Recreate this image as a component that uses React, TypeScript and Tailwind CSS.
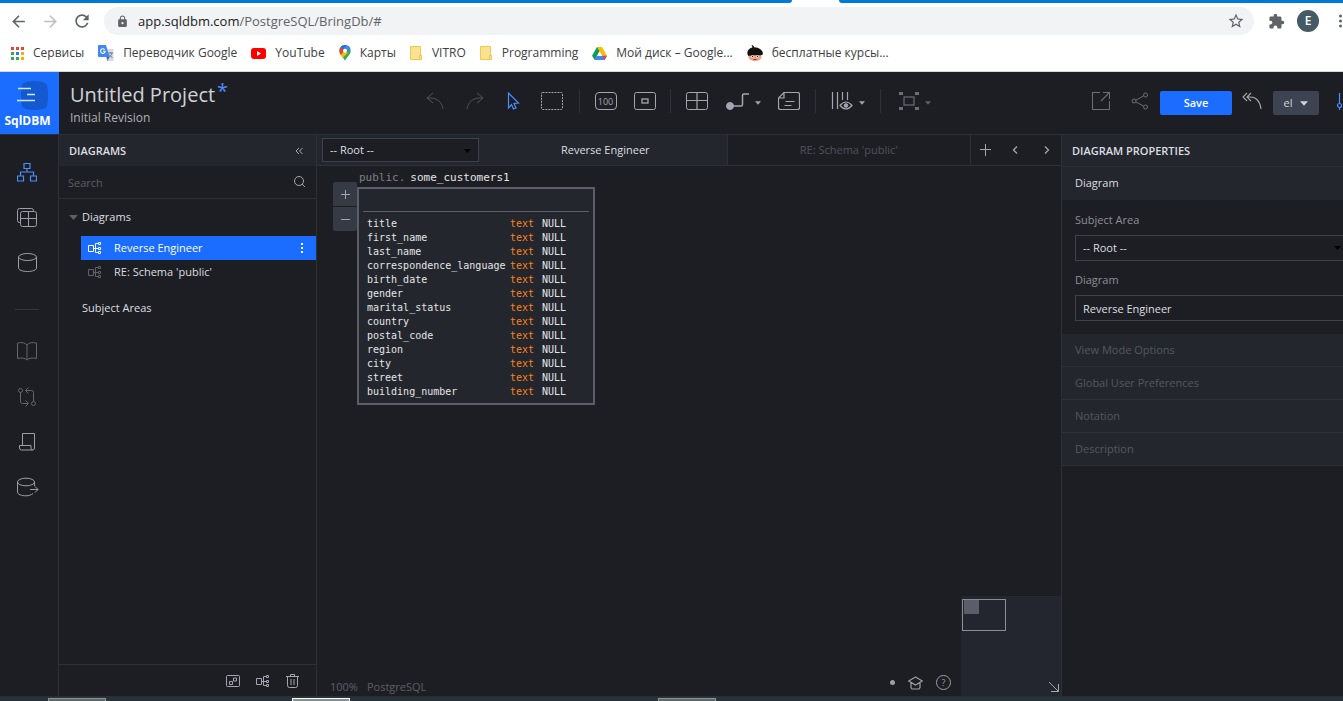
import React from "react";
import { MdLock, MdStarBorder, MdExtension, MdArrowBack, MdArrowForward, MdRefresh } from "react-icons/md";

type SvgProps = { w: number; h: number; className?: string; children: React.ReactNode };

function Icon({ w, h, className = "", children }: SvgProps) {
  return (
    <svg
      width={w}
      height={h}
      viewBox={`0 0 ${w} ${h}`}
      fill="none"
      stroke="currentColor"
      strokeWidth="1"
      className={`shrink-0 ${className}`}
      aria-hidden="true"
    >
      {children}
    </svg>
  );
}

const DiagramIcon = ({ className = "" }: { className?: string }) => (
  <Icon w={14} h={12} className={className}>
    <path d="M.5 3.500h5v6h-5zM5.500 6.500h5M7.500 1.500v9M7.500 1.500h3M7.500 10.500h3" />
    <path d="M10.500.5h2v2h-2zM10.500 5.500h2v2h-2zM10.500 9.500h2v2h-2z" />
  </Icon>
);

const Caret = ({ className = "" }: { className?: string }) => (
  <svg width="7" height="4" viewBox="0 0 7 4" fill="currentColor" className={`shrink-0 ${className}`} aria-hidden="true">
    <path d="M0 0h7L3.500 4z" />
  </svg>
);

const bookmarks = [
  {
    label: "Сервисы",
    icon: (
      <svg width="13" height="13" viewBox="0 0 13 13" aria-hidden="true">
        <path fill="#ea4335" d="M0 0h3v3H0zM5 0h3v3H5zM10 0h3v3h-3z" />
        <path fill="#34a853" d="M0 5h3v3H0zM0 10h3v3H0z" />
        <path fill="#1a84f0" d="M5 5h3v3H5z" />
        <path fill="#34a853" d="M5 10h3v3H5z" />
        <path fill="#fbab05" d="M10 5h3v3h-3zM10 10h3v3h-3z" />
      </svg>
    ),
  },
  {
    label: "Переводчик Google",
    icon: (
      <svg width="16" height="16" viewBox="0 0 16 16" aria-hidden="true">
        <path fill="#d8dade" d="M6 4h9.500v12H9z" />
        <path stroke="#6b7f93" fill="none" d="M10 8h5M12.500 7v1M14 8c-.5 2-2 3.500-3.500 4.500M11 9.500c.8 1.500 2 2.500 3.500 3" />
        <path fill="#4285f4" d="M1 0h7l3.500 12H1a1 1 0 0 1-1-1V1a1 1 0 0 1 1-1z" />
        <path fill="#3367d6" d="M8.500 12h3L9.500 16z" />
        <path stroke="#fff" strokeWidth="1.100" fill="none" d="M6.700 4.600A2.300 2.300 0 1 0 7.200 6.300H5" />
      </svg>
    ),
  },
  {
    label: "YouTube",
    icon: (
      <svg width="15" height="11" viewBox="0 0 15 11" aria-hidden="true">
        <rect width="15" height="11" rx="3" fill="#f00" />
        <path d="M6 3l4 2.500L6 8z" fill="#fff" />
      </svg>
    ),
  },
  {
    label: "Карты",
    icon: (
      <svg width="12" height="16" viewBox="0 0 12 16" aria-hidden="true">
        <path fill="#34a853" d="M6 16C5.500 13 .3 10 .3 5.700A5.700 5.700 0 0 1 11.700 5.700C11.700 10 6.500 13 6 16z" />
        <path fill="#fbbc04" d="M1 8.500l4.800-5 3 4.500-5 4.700C2.500 11.200 1.500 10 1 8.500z" />
        <path fill="#ea4335" d="M1.600 2.100l4 3.400-3.800 4.500C.2 7.500-.2 4.500 1.600 2.100z" />
        <path fill="#1a73e8" d="M1.600 2.100C3.200 0 5.800-.4 7.800.3L4.200 4.500z" />
        <path fill="#4285f4" d="M7.800.3c1.700.5 3 1.800 3.600 3.400L7.500 7.800 4.200 4.500z" />
        <circle cx="6" cy="5.700" r="2" fill="#fff" />
      </svg>
    ),
  },
  { label: "VITRO", icon: <FolderIcon /> },
  { label: "Programming", icon: <FolderIcon /> },
  {
    label: "Мой диск – Google...",
    icon: (
      <svg width="15" height="13" viewBox="0 0 15 13" aria-hidden="true">
        <path fill="#0f9d58" d="M5 0h2.500l1.300 2.400L2.700 13 0 8.700z" />
        <path fill="#fbbc04" d="M5 0h5l5 8.700h-5z" />
        <path fill="#4285f4" d="M5 8.700h10L12.500 13H2.500z" />
        <path fill="#ea4335" d="M10.500 8.700H15L12.500 13z" />
        <path fill="#fff" d="M7.500 4.500l2.400 4.200H5.100z" />
      </svg>
    ),
  },
  {
    label: "бесплатные курсы...",
    icon: (
      <svg width="16" height="16" viewBox="0 0 16 16" aria-hidden="true">
        <path fill="#e9a184" d="M1.500 8h13v3.500c0 3-3 4.500-6.500 4.500s-6.500-1.500-6.500-4.500z" />
        <path fill="#111" d="M4.500 0C6 0 7 1 7.300 2.300 12 2.500 16 5 16 9.200l-1.500.8C14 10.500 3 9.500 1.500 11 0 9.500-.2 6 2 4.200 3 3.200 4.200 2.600 5.500 2.400z" />
        <circle cx="5.500" cy="11.500" r="1.200" fill="#fff" />
        <circle cx="10.500" cy="11.500" r="1.200" fill="#fff" />
        <circle cx="5.500" cy="11.500" r=".7" fill="#222" />
        <circle cx="10.500" cy="11.500" r=".7" fill="#222" />
        <path stroke="#a33" d="M6.500 14.500h3" />
      </svg>
    ),
  },
];

function FolderIcon() {
  return (
    <svg width="13" height="14" viewBox="0 0 13 14" aria-hidden="true">
      <path fill="#fde293" stroke="#f0c84c" d="M.5.5h10v13H.5z" />
      <path fill="#fde293" stroke="#f0c84c" d="M9.500 9.500h2v4h-2z" />
    </svg>
  );
}

function BrowserChrome() {
  return (
    <div className="shrink-0 bg-white">
      <div className="flex h-[3px]">
        <div className="w-[59%] rounded-br-sm bg-[#0078d7]" />
        <div className="w-[47px]" />
        <div className="flex-1 rounded-bl-sm bg-[#0078d7]" />
      </div>
      <div className="flex h-9 items-center text-[#5f6368]">
        <button aria-label="Back" className="flex w-9 justify-center"><MdArrowBack size={19} /></button>
        <button aria-label="Forward" className="flex w-7 justify-center text-[#bdbfc2]"><MdArrowForward size={19} /></button>
        <button aria-label="Reload" className="flex w-9 justify-center"><MdRefresh size={20} /></button>
        <div className="ml-1 flex h-7 flex-1 items-center rounded-full bg-[#f1f3f4] pl-3 pr-[9px]">
          <MdLock size={13} />
          <div className="ml-[9px] flex-1 text-[13px] leading-5">
            <span className="text-[#202124]">app.sqldbm.com</span>/PostgreSQL/BringDb/#
          </div>
          <button aria-label="Bookmark this page"><MdStarBorder size={18} /></button>
        </div>
        <button aria-label="Extensions" className="ml-3 flex w-5 justify-center"><MdExtension size={17} /></button>
        <button className="ml-[11px] flex size-[22px] items-center justify-center rounded-full bg-[#455a64] text-xs font-semibold text-white">
          E
        </button>
        <button aria-label="Menu" className="ml-4 flex w-2 shrink-0 overflow-hidden">
          <svg width="8" height="14" viewBox="0 0 8 14" fill="currentColor" aria-hidden="true">
            <circle cx="5.500" cy="2" r="1.500" /><circle cx="5.500" cy="7" r="1.500" /><circle cx="5.500" cy="12" r="1.500" />
          </svg>
        </button>
      </div>
      <nav className="flex h-[33px] items-center gap-[14px] border-b border-[#d5d9dc] pb-1 pl-[11px] text-xs text-[#3c4043]">
        {bookmarks.map((b) => (
          <a key={b.label} href="#" className="flex items-center gap-[9px] whitespace-nowrap">
            {b.icon}
            {b.label}
          </a>
        ))}
      </nav>
    </div>
  );
}

const Separator = () => <div className="mx-1.5 h-6 w-px bg-[#2f3138]" />;

function Tool({ label, className, children }: { label: string; className: string; children: React.ReactNode }) {
  return (
    <button aria-label={label} className={`flex h-8 items-center justify-center gap-1.5 ${className}`}>
      {children}
    </button>
  );
}

function Header() {
  return (
    <header className="flex h-[63px] shrink-0 border-b border-[#2d3037]">
      <a href="#" className="flex h-[62px] w-[59px] shrink-0 flex-col items-center bg-[#1a6dff] pt-2">
        <svg width="37" height="31" viewBox="0 0 37 31" aria-hidden="true">
          <path d="M11 5c1-3 7-4 12.500-4S35 2 36 5c1.300 6 1.300 15 0 21-1 3-7 4-12.500 4S12 29 11 26c-1.300-6-1.300-15 0-21z" fill="#1459cf" />
          <path d="M7 8.500h13M16 14.500h8M6 20.500h18" stroke="#c9ebff" strokeWidth="1.600" fill="none" />
        </svg>
        <span className="mt-0.5 pr-1 text-xs font-bold leading-4 text-white">SqlDBM</span>
      </a>
      <div className="flex w-[356px] shrink-0 flex-col pl-[11px] pt-[9px]">
        <div className="flex items-start text-xl leading-7 text-[#d0d2d6]">
          Untitled Project<span className="-mt-1 ml-0.5 text-[#4a8dff]">*</span>
        </div>
        <div className="mt-px text-xs leading-4 text-[#aeb0b5]">Initial Revision</div>
      </div>
      <div className="flex h-[58px] items-center text-[#a3a6ae]">
        <Tool label="Undo" className="w-10 text-[#50525c]">
          <Icon w={18} h={18}><path d="M7 1L1 6l6 5M1 6h3c7 0 12 4 13 11" /></Icon>
        </Tool>
        <Tool label="Redo" className="w-10 text-[#50525c]">
          <Icon w={18} h={18}><path d="M11 1l6 5-6 5M17 6h-3C7 6 2 10 1 17" /></Icon>
        </Tool>
        <Tool label="Select" className="w-9 text-[#4a8dff]">
          <Icon w={13} h={18}><path strokeWidth="1.200" d="M1.500 1v15l3-3.500 2 4.500 2.500-1-2-4.500 4.500-.5z" /></Icon>
        </Tool>
        <Tool label="Marquee" className="w-[42px]">
          <Icon w={22} h={18}><rect x=".5" y=".5" width="21" height="17" rx="1" strokeDasharray="2 1" /></Icon>
        </Tool>
        <Separator />
        <Tool label="Zoom to 100" className="w-[39px]">
          <span className="flex h-[18px] w-[22px] items-center justify-center rounded-sm border border-[#a3a6ae] text-[9px] leading-none">100</span>
        </Tool>
        <Tool label="Fit" className="w-[39px]">
          <Icon w={22} h={18}><rect x=".5" y=".5" width="21" height="17" rx="2" /><rect x="8" y="7" width="6" height="4" strokeWidth="1.300" /></Icon>
        </Tool>
        <Separator />
        <Tool label="Add table" className="w-10">
          <Icon w={22} h={18}><rect x=".5" y=".5" width="21" height="17" rx="2" /><path d="M11 .5v17M.5 8.500h21" strokeWidth="1.200" /></Icon>
        </Tool>
        <Tool label="Add relation" className="w-[52px]">
          <Icon w={23} h={18}><circle cx="4" cy="14" r="3.500" fill="currentColor" /><path strokeWidth="1.500" d="M6 14h9q1.500 0 1.500-1.500V3.500Q16.500 2 18 2h5" /></Icon>
          <Caret className="mt-1 w-1.5" />
        </Tool>
        <Tool label="Add note" className="w-10">
          <Icon w={22} h={18}><path d="M6 .5h13.500q2 0 2 2v13q0 2-2 2h-17q-2 0-2-2V6zM6 .5V6H.5M7.500 9.500h9M6.500 13.500h7" strokeWidth="1.200" /></Icon>
        </Tool>
        <Separator />
        <Tool label="View mode" className="w-[52px]">
          <Icon w={22} h={20}><path d="M1.500 1v17M6.500 1v17M11.500 1v8M16.500 1v8" strokeWidth="1.200" /><path d="M9 14.500q6-7 12 0-6 7-12 0z" strokeWidth="1.200" /><circle cx="15" cy="14.500" r="1.800" fill="currentColor" /></Icon>
          <Caret className="mt-1 w-1.5" />
        </Tool>
        <Separator />
        <Tool label="Arrange" className="w-14 text-[#5d606a]">
          <Icon w={20} h={18} className="text-[#6b6d77]"><rect x="5" y="5" width="10" height="8" strokeWidth="1.200" /><path fill="currentColor" stroke="none" d="M0 0h4v3H0zM16 0h4v3h-4zM0 15h4v3H0zM16 15h4v3h-4z" /></Icon>
          <Caret className="mt-1 w-1.5" />
        </Tool>
      </div>
      <div className="ml-auto flex items-center text-[#6b6d77]">
        <Tool label="Export" className="w-[39px] pb-1">
          <Icon w={18} h={18}><path d="M8 .5H.5v17h17V9M11 .5h6.500V7M17.500.5L9 9" strokeWidth="1.100" /></Icon>
        </Tool>
        <Tool label="Share" className="w-[40px] pb-1">
          <Icon w={18} h={18}><circle cx="3" cy="9" r="2" /><circle cx="14.500" cy="3" r="2" /><circle cx="14.500" cy="15" r="2" /><path d="M5 8l7.500-4M5 10l7.500 4" /></Icon>
        </Tool>
        <button className="h-6 w-[72px] rounded-[2px] bg-[#1a6dff] text-[11px] font-semibold text-white">Save</button>
        <Tool label="Revert" className="w-[41px] pb-1 pr-0.5 text-[#a3a6ae]">
          <Icon w={20} h={18}><path d="M5 1L1 5l4 4M9 1L5 5l4 4M5 5h3c7 0 10 4 11 12" strokeWidth="1.100" /></Icon>
        </Tool>
        <button className="flex h-6 w-[46px] items-center justify-center gap-2 rounded-[2px] bg-[#3d4350] text-[11px] text-[#d0d2d6]">
          el <Caret className="h-[5px] w-2" />
        </button>
        <button aria-label="Settings" className="ml-[17px] w-[7px] overflow-hidden pb-1 text-[#4a8dff]">
          <Icon w={7} h={18}><path d="M3.500 1v10M3.500 16v2" strokeWidth="1.200" /><circle cx="3.500" cy="13.500" r="2" strokeWidth="1.200" /></Icon>
        </button>
      </div>
    </header>
  );
}

function Rail() {
  const item = "flex h-[45px] w-full items-center justify-center";
  return (
    <nav className="flex w-[59px] shrink-0 flex-col items-center border-r border-[#2d3037] pr-1 pt-[15px] text-[#9b9ea6]">
      <button aria-label="Diagrams" className={`${item} text-[#4a8dff]`}>
        <Icon w={20} h={19}><path strokeWidth="1.200" d="M7 .5h6v5H7zM.5 13h6v5h-6zM13.500 13h6v5h-6zM10 5.500V9M3.500 13V9h13v4" /></Icon>
      </button>
      <button aria-label="Tables" className={item}>
        <Icon w={20} h={19}><path d="M3.500 14.500H2.500q-2 0-2-2v-10q0-2 2-2h12q2 0 2 2v1" /><rect x="3.500" y="3.500" width="16" height="15" rx="2" /><path d="M11.500 3.500v15M3.500 10.500h16" /></Icon>
      </button>
      <button aria-label="Database" className={item}>
        <Icon w={19} h={19}><ellipse cx="9.500" cy="4" rx="9" ry="3.500" /><path d="M.5 4v11c0 2 4 3.500 9 3.500s9-1.500 9-3.500V4" /></Icon>
      </button>
      <div className="mb-[19px] mt-6 h-px w-6 bg-[#34363e]" />
      <button aria-label="Documentation" className={`${item} text-[#62646e]`}>
        <Icon w={20} h={19}><path d="M10 3Q7-.5.5 1v15.500Q7 15 10 18q3-3 9.500-1.500V1Q13-.5 10 3zM10 3v15" /></Icon>
      </button>
      <button aria-label="Compare" className={`${item} text-[#62646e]`}>
        <Icon w={19} h={20}><circle cx="2.500" cy="3.500" r="2" /><circle cx="15.500" cy="16.500" r="2" /><path d="M2.500 6v8.500q0 2 2 2H10M7.500 13.500l3 3-3 3M15.500 14V5.500q0-2-2-2H8M10.500.5l-3 3 3 3" /></Icon>
      </button>
      <button aria-label="Scripts" className={item}>
        <Icon w={17} h={18}><path d="M3.500 12.500V.5h12v14.500q0 2-2 2h-11q-2 0-2-2v-2.500h11.500v2.500q0 2 1.500 2" /></Icon>
      </button>
      <button aria-label="Forward database" className={item}>
        <Icon w={22} h={20} className="ml-0.5"><ellipse cx="9" cy="5" rx="8.500" ry="3.800" /><path d="M.5 5v10c0 2.500 4 3.800 8.500 3.800 3 0 5-.8 7-2.300M17.500 5v4M13 12.500h8M18 9.500l3 3-3 3" /></Icon>
      </button>
    </nav>
  );
}

function DiagramsPanel() {
  return (
    <aside className="flex w-[258px] shrink-0 flex-col border-r border-[#2d3037] text-[11px] text-[#dcdee1]">
      <div className="flex h-[31px] items-center justify-between bg-[#23262d] pl-2.5 pr-[13px]">
        <h2 className="pt-0.5 font-semibold">DIAGRAMS</h2>
        <button aria-label="Collapse" className="text-[#a3a6ae]">
          <Icon w={8} h={8}><path d="M4 1L1 4l3 3M7.500 1l-3 3 3 3" /></Icon>
        </button>
      </div>
      <div className="flex h-[33px] items-center border-b border-[#2d3037] pl-[9px] pr-[11px]">
        <input aria-label="Search" placeholder="Search" className="min-w-0 flex-1 bg-transparent pt-0.5 outline-none placeholder:text-[#5b5e68]" />
        <button aria-label="Run search" className="pb-0.5 text-[#a3a6ae]">
          <Icon w={11} h={11}><circle cx="5" cy="5" r="4.500" /><path d="M8 8l3 3" /></Icon>
        </button>
      </div>
      <div className="flex-1">
        <button className="mt-1.5 flex h-6 items-center gap-1 pl-2.5">
          <Caret className="h-[5px] w-[9px] text-[#5d606a]" /> Diagrams
        </button>
        <div className="ml-[22px] mt-[7px]">
          <button className="flex h-6 w-full items-center gap-3 bg-[#1a6dff] pl-[7px] pr-[13px] text-white">
            <DiagramIcon />
            <span className="flex-1 text-left">Reverse Engineer</span>
            <svg width="2" height="10" viewBox="0 0 2 10" fill="currentColor" aria-hidden="true">
              <path d="M0 0h2v2H0zM0 4h2v2H0zM0 8h2v2H0z" />
            </svg>
          </button>
          <button className="flex h-6 w-full items-center gap-3 pl-[7px]">
            <DiagramIcon className="text-[#5d606a]" />
            RE: Schema 'public'
          </button>
        </div>
        <button className="ml-[23px] mt-3 flex h-6 items-center">Subject Areas</button>
      </div>
      <div className="flex h-8 items-center justify-end gap-4 border-t border-[#2d3037] pr-[17px] text-[#a3a6ae]">
        <button aria-label="New subject area">
          <Icon w={14} h={12}><rect x=".5" y=".5" width="13" height="11" rx="1" /><path d="M3.500 6.500h3v3h-3zM7.500 3h3v3h-3z" /></Icon>
        </button>
        <button aria-label="New diagram"><DiagramIcon /></button>
        <button aria-label="Delete">
          <Icon w={13} h={14}><path d="M0 2.500h13M4.500 2.500v-2h4v2M1.500 2.500v9q0 2 2 2h6q2 0 2-2v-9M5 5v6M8 5v6" /></Icon>
        </button>
      </div>
    </aside>
  );
}

const columns = [
  "title", "first_name", "last_name", "correspondence_language", "birth_date", "gender", "marital_status",
  "country", "postal_code", "region", "city", "street", "building_number",
];

function Canvas() {
  return (
    <main className="flex min-w-0 flex-1 flex-col">
      <div className="flex h-[31px] shrink-0 border-b border-[#2d3037] text-[11px] text-[#dcdee1]">
        <div className="relative flex items-center bg-[#23262d] px-[5px]">
          <select aria-label="Subject area" className="h-6 w-[157px] appearance-none rounded-none border border-[#3d414b] bg-[#1d1e23] pl-[7px]">
            <option>-- Root --</option>
          </select>
          <Caret className="pointer-events-none absolute right-[13px] top-[14px] text-black" />
        </div>
        <button className="flex-1 border-r border-[#2d3037] bg-[#23262d]">Reverse Engineer</button>
        <button className="flex-1 border-r border-[#2d3037] text-[#50525c]">RE: Schema 'public'</button>
        <div className="flex w-[90px] items-center pl-2 text-[#a3a6ae]">
          <button aria-label="Add tab"><Icon w={13} h={12}><path d="M6.500 0v12M1 5.500h11" /></Icon></button>
          <button aria-label="Previous tab" className="ml-5 pb-px"><Icon w={6} h={8}><path strokeWidth="1.300" d="M5 .5L1.500 4 5 7.500" /></Icon></button>
          <button aria-label="Next tab" className="ml-[26px] pb-px"><Icon w={6} h={8}><path strokeWidth="1.300" d="M1 .5L4.500 4 1 7.500" /></Icon></button>
        </div>
      </div>
      <div className="relative flex-1">
        <div className="absolute left-4 top-4 flex flex-col gap-px text-[#a3a6ae]">
          <button aria-label="Zoom in" className="flex h-6 w-6 items-center justify-center rounded-t-[2px] bg-[#363a44]">
            <Icon w={9} h={9}><path d="M4.500 0v9M0 4.500h9" /></Icon>
          </button>
          <button aria-label="Zoom out" className="flex h-6 w-6 items-center justify-center rounded-b-[2px] bg-[#363a44]">
            <Icon w={9} h={9}><path d="M0 4.500h9" /></Icon>
          </button>
        </div>
        <div className="absolute left-10 top-[5px] w-[238px] font-['DejaVu_Sans_Mono',monospace]">
          <div className="flex h-4 gap-[5px] pl-0.5 text-[11px] leading-[14px]">
            <span className="text-[#7d7f87]">public.</span>
            <span className="text-[#e4e5e8]">some_customers1</span>
          </div>
          <div className="border-2 border-[#5b5e69] bg-[#23262d] px-1 pb-1">
            <div className="mb-[5px] h-[23px] border-b border-[#5b5e69]" />
            <table className="w-full table-fixed text-[10px] leading-[14px] text-[#e4e5e8]">
              <colgroup>
                <col className="w-[147px]" />
                <col className="w-8" />
                <col />
              </colgroup>
              <tbody>
                {columns.map((c) => (
                  <tr key={c}>
                    <td className="pl-1">{c}</td>
                    <td className="text-[#f58220]">text</td>
                    <td>NULL</td>
                  </tr>
                ))}
              </tbody>
            </table>
          </div>
        </div>
        <div className="absolute -bottom-px left-[13px] flex gap-[9px] text-[11px] leading-5 text-[#5b5e68]">
          <span>100%</span>
          <span>PostgreSQL</span>
        </div>
        <div className="absolute bottom-1.5 right-[110px] flex items-center gap-[13px] text-[#9b9ea6]">
          <span className="size-[5px] rounded-full bg-[#9b9ea6]" />
          <button aria-label="Tutorials">
            <Icon w={15} h={14}><path strokeWidth="1.200" d="M7.500 1L.7 5l6.800 4 6.800-4zM3 6.500v5l1 1.500h7l1-1.500v-5" /></Icon>
          </button>
          <button aria-label="Help" className="flex size-[15px] items-center justify-center rounded-full border border-[#9b9ea6] text-[9px] leading-none">?</button>
        </div>
        <div className="absolute bottom-0 right-0 size-[100px] bg-[#23262f]">
          <div className="ml-px mt-[3px] h-8 w-11 border border-[#8b8e97] pl-px">
            <div className="h-[14px] w-[15px] bg-[#5b5e69]" />
          </div>
          <button aria-label="Collapse minimap" className="absolute bottom-1 right-0.5 text-[#a3a6ae]">
            <Icon w={11} h={11}><path d="M1 1l9 9M10.500 3v7.500H3" /></Icon>
          </button>
        </div>
      </div>
    </main>
  );
}

function PropertiesPanel() {
  return (
    <aside className="w-[282px] shrink-0 overflow-hidden border-l border-[#2d3037] text-[11px] text-[#dcdee1]">
      <h2 className="flex h-[31px] items-center bg-[#23262d] pl-2.5 pt-0.5 font-semibold">DIAGRAM PROPERTIES</h2>
      <button className="flex h-[34px] w-full items-center border-t border-[#2d3037] bg-[#23262d] pl-[13px]">Diagram</button>
      <div className="pb-[13px] pl-[13px] pt-2.5">
        <label htmlFor="area" className="flex h-[25px] items-center pb-1 text-[#8c8f97]">Subject Area</label>
        <div className="relative">
          <select id="area" className="block h-[26px] w-full appearance-none rounded-none border border-r-0 border-[#3d414b] bg-transparent pl-[7px]">
            <option>-- Root --</option>
          </select>
          <Caret className="pointer-events-none absolute right-0.5 top-[11px] text-black" />
        </div>
        <label htmlFor="diagram" className="mt-[9px] flex h-[25px] items-center pb-1 text-[#8c8f97]">Diagram</label>
        <input id="diagram" defaultValue="Reverse Engineer" className="block h-[26px] w-full border border-r-0 border-[#3d414b] bg-transparent pl-[7px]" />
      </div>
      {["View Mode Options", "Global User Preferences", "Notation", "Description"].map((s) => (
        <button key={s} className="flex h-[33px] w-full items-center border-b border-[#2d3037] bg-[#23262d] pl-[13px] text-[#555861]">
          {s}
        </button>
      ))}
    </aside>
  );
}

export default function App() {
  return (
    <div className="flex h-screen flex-col overflow-hidden bg-[#1d1e23] font-['Open_Sans',sans-serif]">
      <BrowserChrome />
      <Header />
      <div className="flex min-h-0 flex-1">
        <Rail />
        <DiagramsPanel />
        <Canvas />
        <PropertiesPanel />
      </div>
      <div className="flex h-[5px] shrink-0 border-t border-[#2a2d34] bg-[#26343a] pl-12">
        <div className="mt-px w-[58px] border border-b-0 border-[#8c9598] bg-[#5e686b]" />
        <div className="ml-[186px] mt-px w-[58px] border border-b-0 border-white bg-[#879193]" />
        <div className="ml-[308px] mt-px w-[58px] border border-b-0 border-[#8c9598] bg-[#5e686b]" />
      </div>
    </div>
  );
}
